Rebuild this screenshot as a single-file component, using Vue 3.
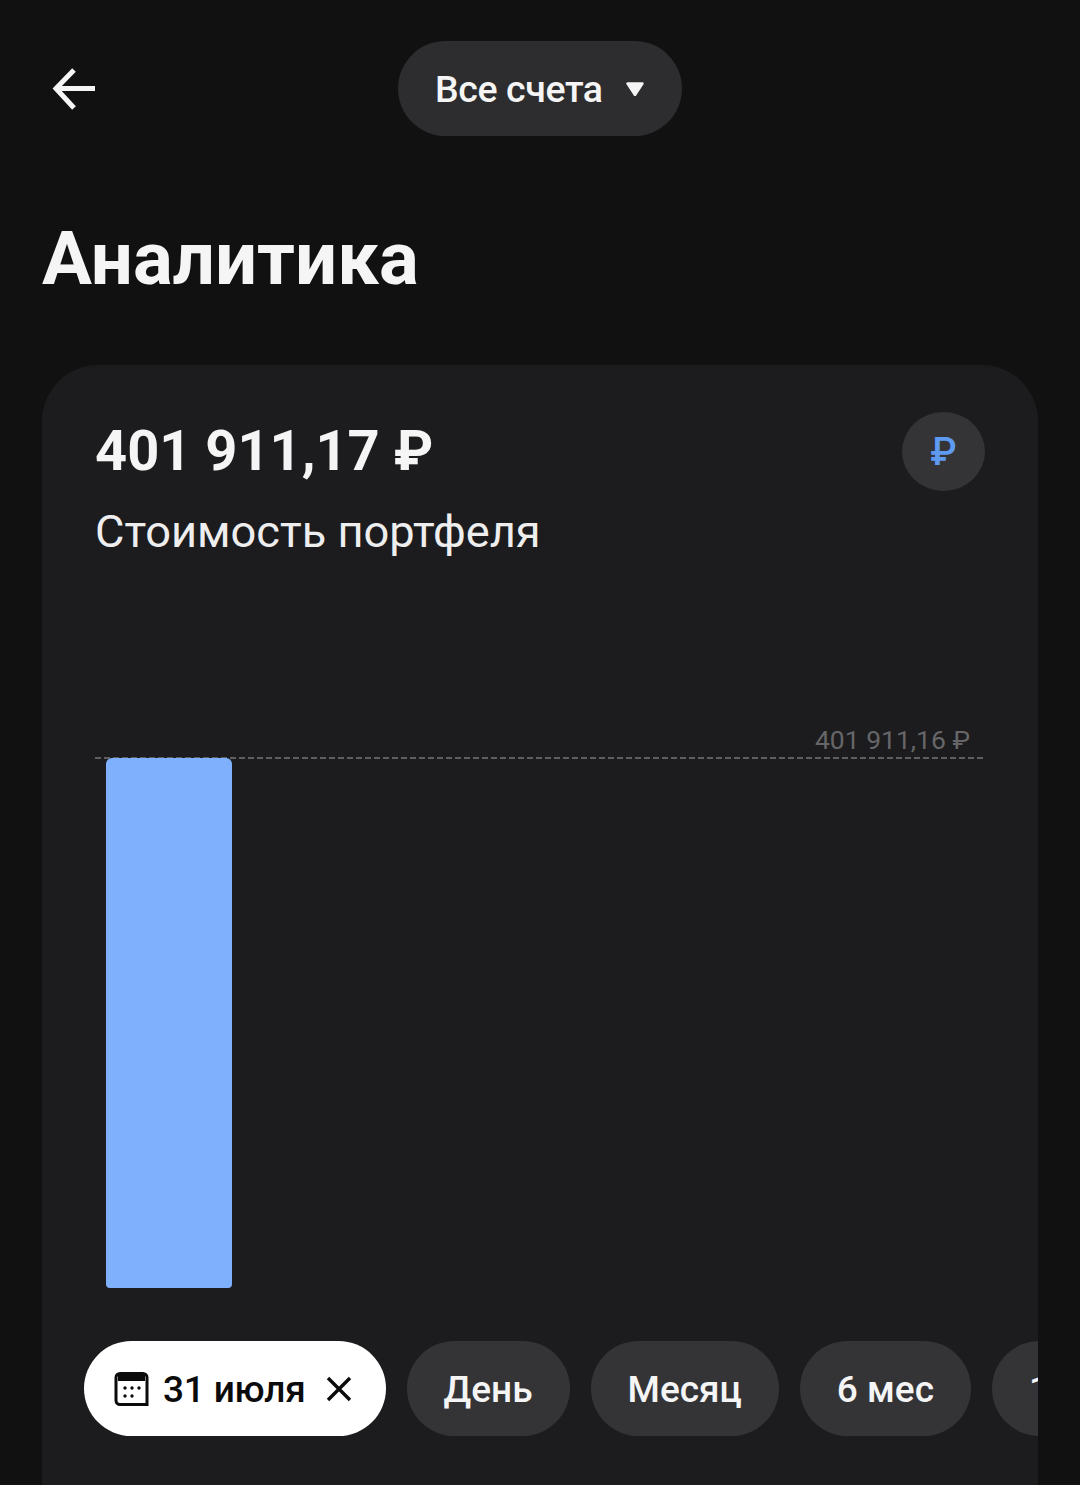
<template>
  <div class="page">
    <header class="topbar">
      <button class="back" type="button" aria-label="Назад">
        <svg width="46" height="44" viewBox="0 0 46 44" fill="none" stroke="#f5f5f6" stroke-width="5">
          <path d="M44 21.5H5" />
          <path d="M23 3L5 21.5 23 41" />
        </svg>
      </button>
      <button class="account" type="button">
        <span>Все счета</span>
        <svg width="18" height="15" viewBox="0 0 18 15"><path d="M1.5 2.5h15L9 14z" fill="#f5f5f6" stroke="#f5f5f6" stroke-width="2.4" stroke-linejoin="round" /></svg>
      </button>
    </header>

    <h1 class="title">Аналитика</h1>

    <section class="card">
      <div class="summary">
        <div>
          <div class="amount">401 911,17 ₽</div>
          <div class="caption">Стоимость портфеля</div>
        </div>
        <div class="currency">₽</div>
      </div>

      <div class="chart">
        <div class="chart__value">401 911,16 ₽</div>
        <div class="chart__line"></div>
        <div class="chart__bar"></div>
      </div>

      <div class="chips">
        <button class="chip chip--active" type="button">
          <svg width="36" height="36" viewBox="0 0 36 36">
            <path d="M6 2.5h23a4 4 0 0 1 4 4v27H6a4 4 0 0 1-4-4v-23a4 4 0 0 1 4-4z" fill="none" stroke="#0b0b0c" stroke-width="3" />
            <path d="M4 3h27v7H4z" fill="#0b0b0c" />
            <g fill="#0b0b0c">
              <circle cx="11" cy="17" r="1.7" /><circle cx="18" cy="17" r="1.7" /><circle cx="25" cy="17" r="1.7" />
              <circle cx="11" cy="25" r="1.7" /><circle cx="18" cy="25" r="1.7" />
            </g>
          </svg>
          <span>31 июля</span>
          <svg class="chip__close" width="26" height="26" viewBox="0 0 26 26" stroke="#0b0b0c" stroke-width="3.4" fill="none">
            <path d="M2 2l22 22M24 2L2 24" />
          </svg>
        </button>
        <button v-for="p in periods" :key="p" class="chip" type="button">{{ p }}</button>
      </div>
    </section>
  </div>
</template>

<script setup>
const periods = ['День', 'Месяц', '6 мес', '1 год']
</script>

<style>
html, body { background: #111112; }
</style>

<style scoped>
.page {
  width: 1080px;
  height: 1485px;
  overflow: hidden;
  background: #111112;
  color: #f5f5f6;
  font-family: Roboto, "Liberation Sans", sans-serif;
}

button {
  border: 0;
  padding: 0;
  font: inherit;
  color: inherit;
  background: none;
}

.topbar {
  position: relative;
  display: flex;
  justify-content: center;
  padding-top: 41px;
}

.back {
  position: absolute;
  left: 51px;
  top: 67px;
  display: block;
  line-height: 0;
}

.account {
  display: flex;
  align-items: center;
  gap: 23px;
  width: 284px;
  height: 95px;
  padding: 0 0 0 37px;
  border-radius: 48px;
  background: #2d2d2f;
  font-size: 37.5px;
  font-weight: 500;
  letter-spacing: -0.4px;
}

.title {
  margin: 82px 0 0 42px;
  font-size: 74.4px;
  line-height: 82px;
  font-weight: 700;
}

.card {
  height: 1200px;
  margin: 65px 42px 0;
  padding: 47px 0 0;
  overflow: hidden;
  border-radius: 56px 56px 0 0;
  background: #1c1c1e;
}

.summary {
  display: flex;
  justify-content: space-between;
  padding: 0 53px;
}

.amount {
  font-size: 56px;
  line-height: 78px;
  font-weight: 700;
}

.caption {
  margin-top: 2px;
  font-size: 45.2px;
  line-height: 79px;
  font-weight: 400;
  color: #eeeeef;
}

.currency {
  width: 83px;
  height: 79px;
  border-radius: 50%;
  background: #343437;
  color: #5f9af2;
  font-size: 38px;
  font-weight: 500;
  line-height: 81px;
  text-align: center;
}

.chart {
  position: relative;
  height: 584px;
  margin: 186px 55px 0 53px;
}

.chart__value {
  position: absolute;
  right: 13px;
  top: -33px;
  font-size: 26.5px;
  line-height: 32px;
  color: #666668;
}

.chart__line {
  height: 2px;
  background: repeating-linear-gradient(90deg, #5f5f61 0 6px, transparent 6px 9px);
}

.chart__bar {
  position: absolute;
  left: 11px;
  top: 1px;
  width: 126px;
  height: 530px;
  border-radius: 6px 6px 4px 4px;
  background: #7eb0fd;
}

.chips {
  display: flex;
  gap: 21px;
  padding-left: 42px;
}

.chip {
  flex: none;
  height: 95px;
  padding: 1px 37px 0;
  border-radius: 48px;
  background: #343436;
  font-size: 37px;
  font-weight: 500;
  color: #f5f5f6;
}

.chip--active {
  display: flex;
  align-items: center;
  gap: 13px;
  padding: 1px 34px 0 30px;
  background: #fff;
  color: #0b0b0c;
}

.chip--active span {
  letter-spacing: -0.2px;
}

.chip__close {
  margin-left: 7px;
}
</style>
